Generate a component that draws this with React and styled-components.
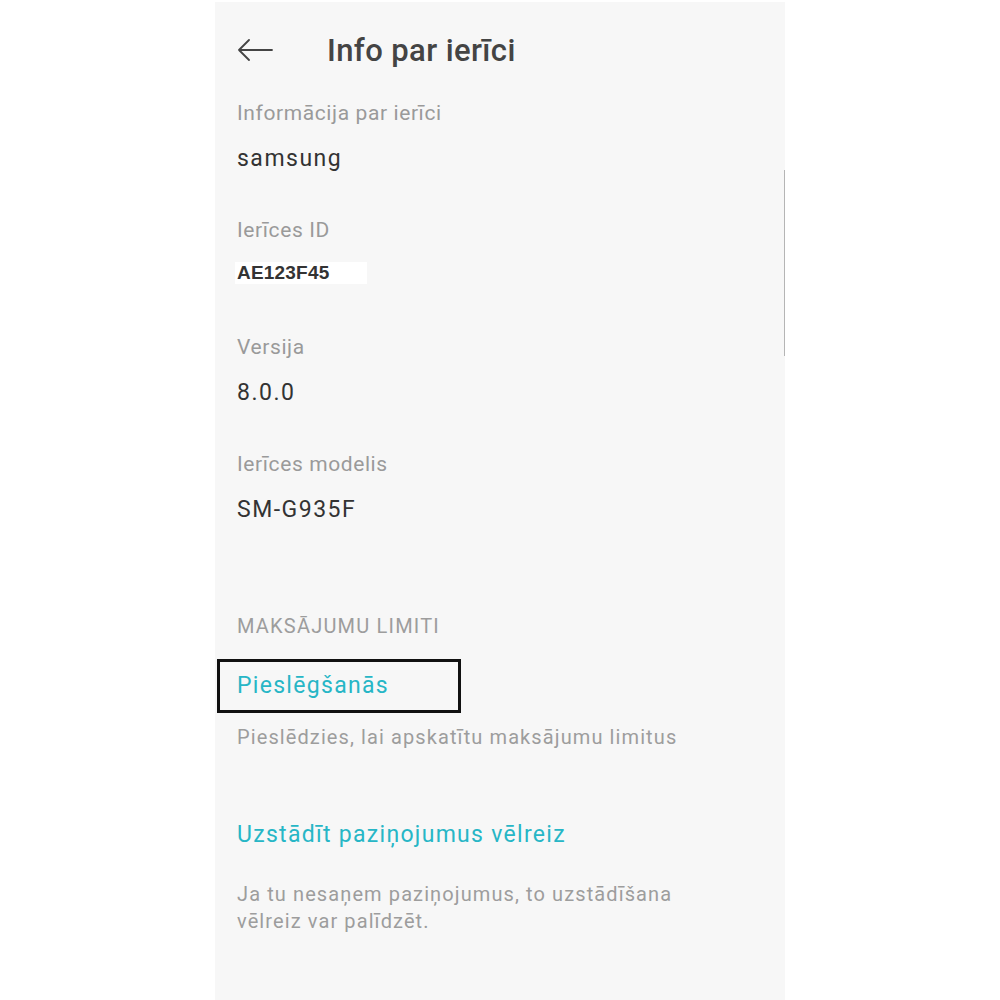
import React from "react";
import styled, { createGlobalStyle } from "styled-components";

const GlobalStyle = createGlobalStyle`
  html, body {
    margin: 0;
    padding: 0;
    background: #ffffff;
  }
  body {
    font-family: Roboto, "Noto Sans", sans-serif;
  }
`;

const Page = styled.div`
  width: 1000px;
  height: 1000px;
  display: flex;
  justify-content: center;
  padding-top: 2px;
  box-sizing: border-box;
`;

const Screen = styled.div`
  position: relative;
  width: 570px;
  height: 998px;
  background: #f7f7f7;
  padding: 0 22px;
  box-sizing: border-box;
`;

const ScrollThumb = styled.div`
  position: absolute;
  right: 0;
  top: 168px;
  width: 1px;
  height: 186px;
  background: #b5b5b5;
`;

const Header = styled.div`
  display: flex;
  align-items: center;
  height: 96px;
  gap: 54px;
`;

const Title = styled.h1`
  margin: 0;
  font-size: 31px;
  font-weight: 500;
  color: #444444;
  letter-spacing: 0.4px;
`;

const Item = styled.div`
  display: flex;
  flex-direction: column;
  margin-bottom: ${({ $gap }) => $gap || 0}px;
`;

const Label = styled.div`
  font-size: 21px;
  line-height: 30px;
  color: #9a9a9a;
  height: 30px;
  letter-spacing: 0.6px;
`;

const Value = styled.div`
  margin-top: 16px;
  font-size: 23px;
  line-height: 30px;
  color: #333333;
  letter-spacing: 1.5px;
`;

const IdValue = styled.div`
  margin-top: 17px;
  margin-bottom: 7px;
  align-self: flex-start;
  margin-left: -2px;
  width: 132px;
  height: 22px;
  padding-left: 2px;
  box-sizing: border-box;
  background: #ffffff;
  font-family: "Liberation Sans", Arial, sans-serif;
  font-weight: 700;
  font-size: 19px;
  line-height: 22px;
  color: #333333;
  letter-spacing: 0.2px;
`;

const Section = styled.div`
  font-size: 20px;
  line-height: 30px;
  color: #9d9d9d;
  letter-spacing: 1.2px;
`;

const LinkBox = styled.div`
  align-self: flex-start;
  margin-left: -20px;
  width: 244px;
  height: 54px;
  margin-top: 18px;
  box-sizing: border-box;
  border: 3px solid #111111;
  padding-left: 17px;
  display: flex;
  align-items: center;
`;

const Link = styled.div`
  font-size: 23px;
  line-height: 30px;
  color: #27b6c6;
  letter-spacing: 1.3px;
  margin-top: ${({ $mt }) => $mt || 0}px;
`;

const Desc = styled.div`
  font-size: 20px;
  line-height: 27px;
  color: #9d9d9d;
  letter-spacing: 1.1px;
  margin-top: ${({ $mt }) => $mt || 0}px;
`;

const BackArrow = () => (
  <svg width="36" height="24" viewBox="0 0 36 24" fill="none">
    <path d="M35 12H2M12 2L2 12l10 10" stroke="#444" strokeWidth="1.8" strokeLinecap="round" strokeLinejoin="round" />
  </svg>
);

const fields = [
  { label: "Informācija par ierīci", value: "samsung" },
  { label: "Ierīces ID", value: "AE123F45", id: true },
  { label: "Versija", value: "8.0.0" },
  { label: "Ierīces modelis", value: "SM-G935F" },
];

export default function App() {
  return (
    <Page>
      <GlobalStyle />
      <Screen>
        <ScrollThumb />
        <Header>
          <BackArrow />
          <Title>Info par ierīci</Title>
        </Header>
        {fields.map((f, i) => (
          <Item key={f.label} $gap={i === fields.length - 1 ? 86 : 41}>
            <Label>{f.label}</Label>
            {f.id ? <IdValue>{f.value}</IdValue> : <Value>{f.value}</Value>}
          </Item>
        ))}
        <Item>
          <Section>MAKSĀJUMU LIMITI</Section>
          <LinkBox>
            <Link>Pieslēgšanās</Link>
          </LinkBox>
          <Desc $mt={11}>Pieslēdzies, lai apskatītu maksājumu limitus</Desc>
          <Link $mt={69}>Uzstādīt paziņojumus vēlreiz</Link>
          <Desc $mt={31}>
            Ja tu nesaņem paziņojumus, to uzstādīšana
            <br />
            vēlreiz var palīdzēt.
          </Desc>
        </Item>
      </Screen>
    </Page>
  );
}
